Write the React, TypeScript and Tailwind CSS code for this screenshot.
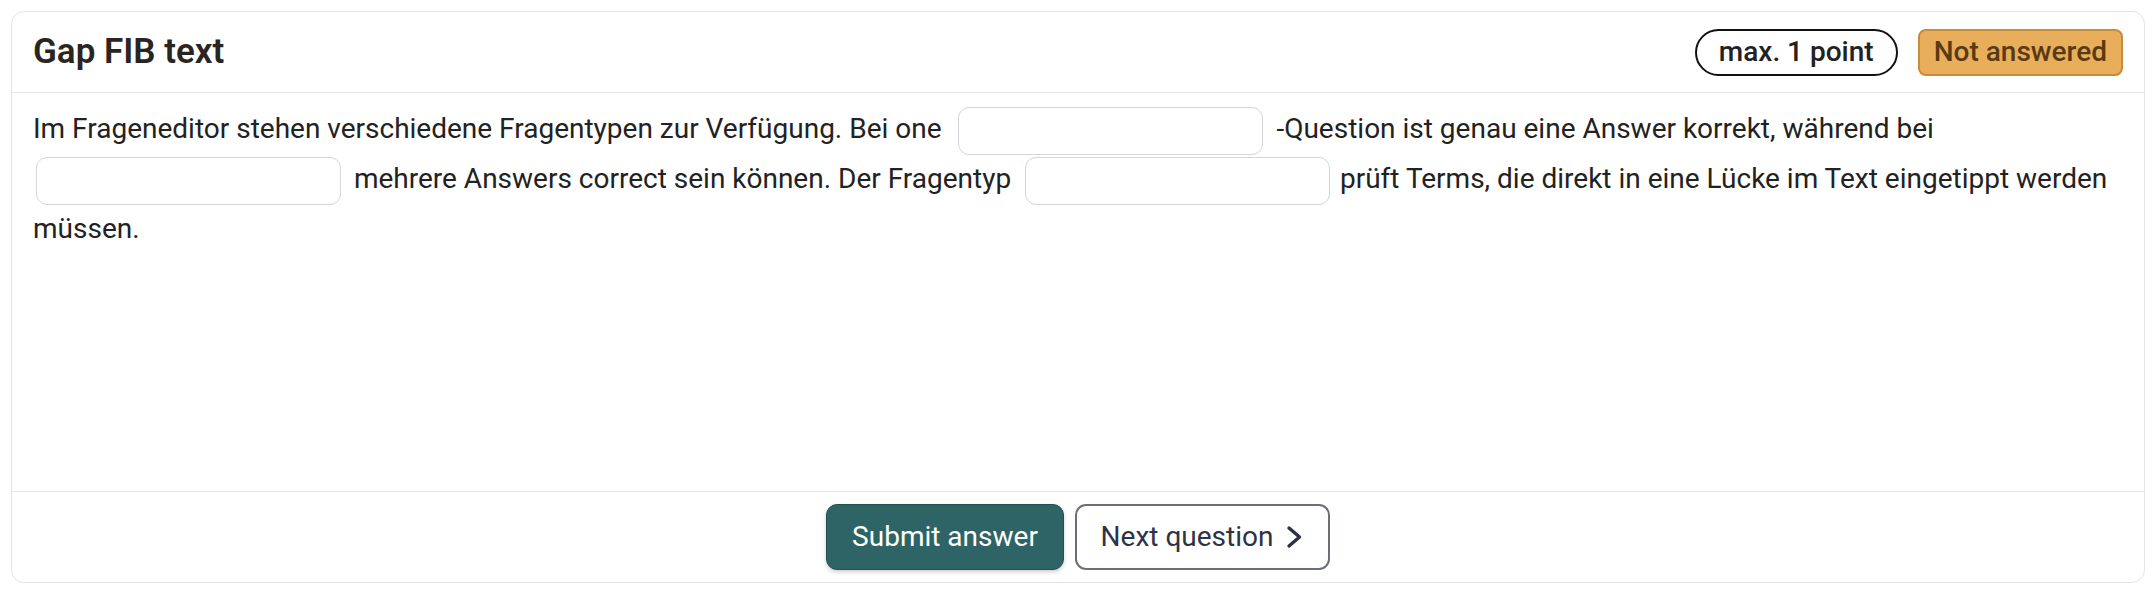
function GapInput({ className }: { className: string }) {
  return (
    <input
      type="text"
      className={`my-[1px] inline-block h-[48px] w-[305px] rounded-[11px] border border-[#d4d6db] bg-white px-3 align-middle text-[28px] focus:outline-none ${className}`}
    />
  );
}

function Chevron() {
  return (
    <svg width="18" height="26" viewBox="0 0 18 26" fill="none" stroke="currentColor" strokeWidth="3.4" strokeLinecap="round" strokeLinejoin="round">
      <path d="M3 4 L13.5 13 L3 22" />
    </svg>
  );
}

export default function App() {
  return (
    <div className="h-[590px] w-full bg-white px-[11px] pt-[11px] font-['Roboto',sans-serif]">
      <div className="flex h-[572px] flex-col rounded-[13px] border border-[#e4e4ea] bg-white">
        {/* header */}
        <div className="flex h-[81px] items-center justify-between border-b border-[#e4e4ea] px-[21px]">
          <h2 className="text-[35px] font-semibold text-[#2a2520]">Gap FIB text</h2>
          <div className="flex items-center gap-[20px]">
            <span className="flex h-[47px] items-center rounded-full border-2 border-[#111] px-[22px] text-[28px] font-medium text-[#222]">
              max. 1 point
            </span>
            <span className="flex h-[47px] items-center rounded-[8px] border-2 border-[#c98b3a] bg-[#e8ae5c] px-[14px] text-[28px] font-medium text-[#5a3a10]">
              Not answered
            </span>
          </div>
        </div>

        {/* question body */}
        <div className="flex-1 px-[21px] pt-[13px]">
          <p className="text-[28px] leading-[46px] text-[#222]">
            Im Frageneditor stehen verschiedene Fragentypen zur Verfügung. Bei one&nbsp;{' '}
            <GapInput className="ml-[3px] mr-[13px]" />
            -Question ist genau eine Answer korrekt, während bei&nbsp;{' '}
            <GapInput className="ml-[3px] mr-[6px]" /> mehrere Answers correct sein können. Der
            Fragentyp&nbsp;{' '}
            <GapInput className="ml-[0px] mr-[3px]" /> prüft Terms, die direkt in eine Lücke im Text
            eingetippt werden müssen.
          </p>
        </div>

        {/* footer */}
        <div className="flex h-[91px] items-center justify-center gap-[11px] border-t border-[#e4e4ea]">
          <button className="h-[66px] w-[238px] rounded-[11px] border border-[#24504f] bg-[#2e6466] text-[28px] text-white shadow-[0_2px_4px_rgba(0,0,0,0.2)]">
            Submit answer
          </button>
          <button className="flex h-[66px] w-[255px] items-center justify-center gap-[13px] rounded-[11px] border-2 border-[#6b6f7a] bg-white text-[28px] text-[#2c3345]">
            Next question
            <Chevron />
          </button>
        </div>
      </div>
    </div>
  );
}
